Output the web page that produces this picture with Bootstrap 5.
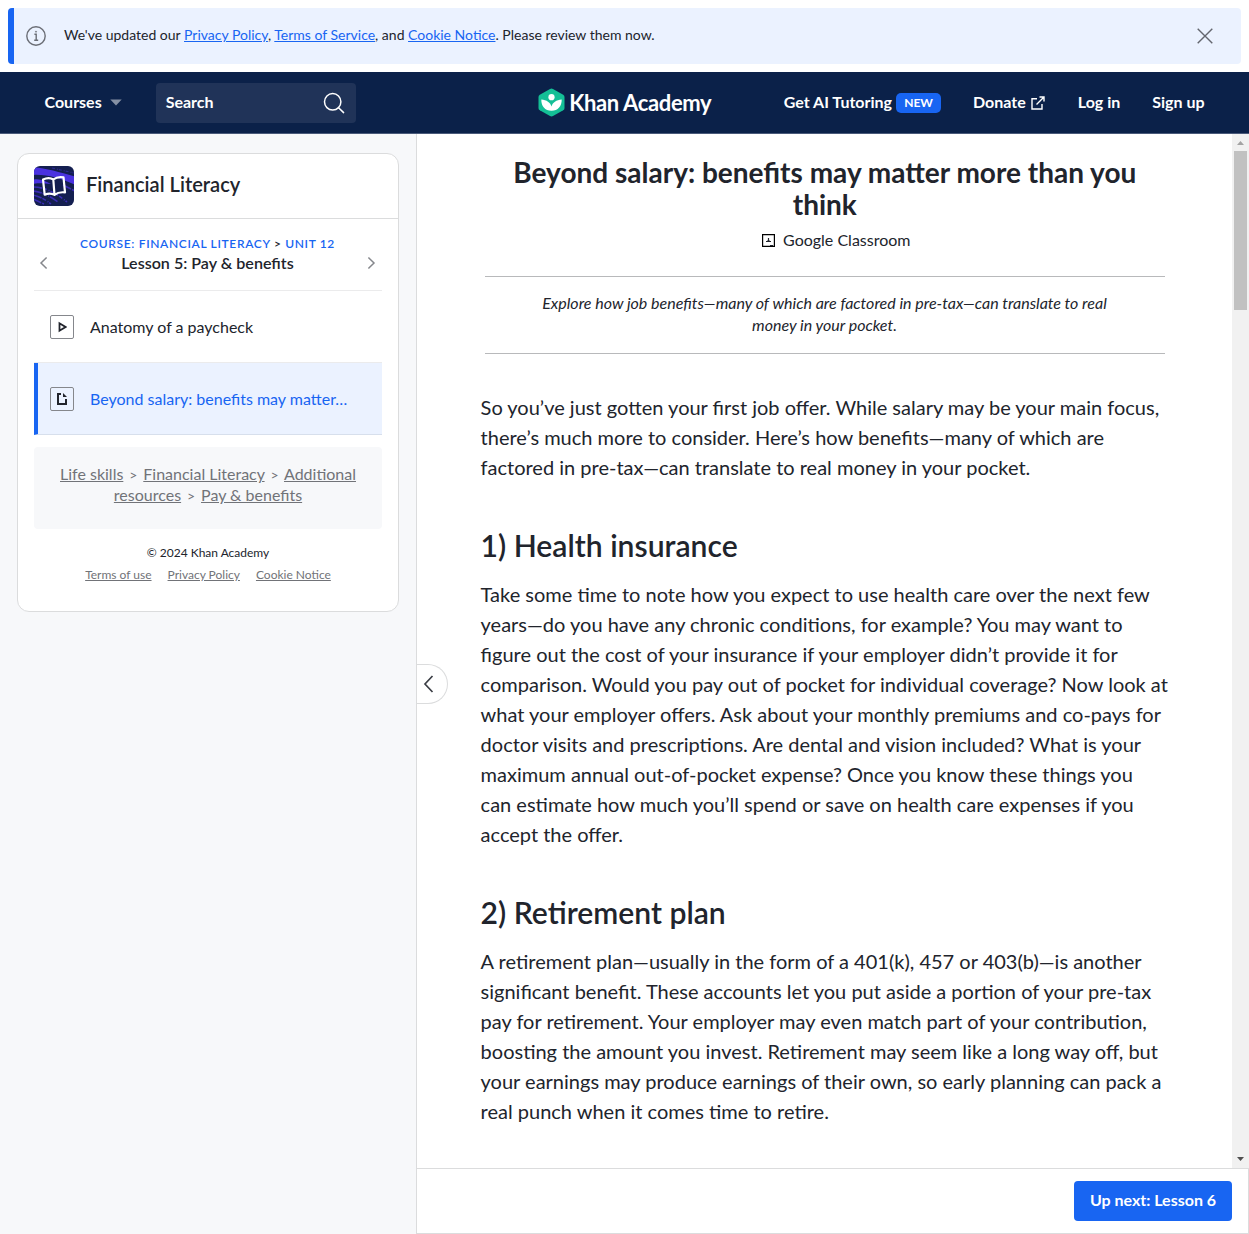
<!DOCTYPE html>
<html lang="en">
<head>
<meta charset="utf-8">
<meta name="viewport" content="width=device-width, initial-scale=1">
<title>Beyond salary: benefits may matter more than you think | Khan Academy</title>
<link href="https://cdn.jsdelivr.net/npm/bootstrap@5.3.0/dist/css/bootstrap.min.css" rel="stylesheet">
<style>
  :root { --ka-blue: #1865f2; --ka-navy: #0b2149; --ka-ink: #21242c; --ka-muted: #717378; --ka-line: #dbdcdd; }
  body { font-family: Lato, "Liberation Sans", sans-serif; color: var(--ka-ink); height: 1234px; font-size: 16px; line-height: 20px; }
  svg { display: block; flex: none; }
  .notice { margin: 8px; height: 56px; background: #ebf2ff; border-radius: 4px; border-left: 6px solid var(--ka-blue); padding: 0 24px 0 10px; font-size: 14px; }
  .notice a { color: var(--ka-blue); }
  .notice-text { margin-left: 16px; padding-bottom: 2px; }
  .topbar { height: 62px; background: var(--ka-navy); border-bottom: 1px solid #4a5a7a; padding: 0 44.5px; font-weight: 700; color: #fff; }
  .topbar a { color: #fff; text-decoration: none; white-space: nowrap; }
  .side-l, .side-r { flex: 1 1 0; }
  .up1 { padding-bottom: 2px; }
  .searchbox { width: 200px; height: 40px; background: #203358; border-radius: 4px; padding: 0 10px; margin-left: 34px; }
  .brand-name { font-size: 22px; line-height: 28px; letter-spacing: -.36px; margin-left: 4.5px; padding-top: 1px; }
  .new-badge { background: var(--ka-blue); border-radius: 5px; font-size: 12px; line-height: 20px; height: 20px; width: 45px; text-align: center; margin-left: 4px; }
  .nav-gap { gap: 32px; }
  .ext-icon { margin: 0 1px 0 5px; }
  .main-area { height: 1100px; }
  .sidebar { width: 417px; background: #f7f8fa; border-right: 1px solid var(--ka-line); padding: 19px 17px; }
  .lesson-card { border: 1px solid var(--ka-line); border-radius: 12px; background: #fff; height: 459px; }
  .course-head { height: 65px; border-bottom: 1px solid var(--ka-line); padding: 0 16px; font-size: 20.1px; line-height: 24px; }
  .course-name { padding: 0 0 4px 12px; }
  .semi { font-weight: 600; }
  .lesson-nav { margin: 0 16px; height: 72px; border-bottom: 1px solid #ebebec; padding: 16px 6px 0 5px; }
  .chev { margin-top: 20px; }
  .crumb { font-size: 12px; letter-spacing: .65px; line-height: 18px; color: var(--ka-ink); }
  .crumb a { color: var(--ka-blue); text-decoration: none; }
  .lesson-name { font-size: 16.080px; }
  .lesson-row { margin: 0 16px; height: 72px; padding: 0 16px; box-shadow: 0 -1px #ebebec; }
  .lesson-row.current { background: #ebf2ff; color: var(--ka-blue); border-left: 4px solid var(--ka-blue); padding-left: 12px; border-bottom: 1px solid #d7dfec; }
  .kind { width: 24px; height: 24px; border: 1px solid #85878c; border-radius: 2px; margin-right: 16px; }
  .path-box { margin: 12px 16px 0; height: 82px; padding: 16px 20px 0; background: #f7f8fa; border-radius: 4px; color: var(--ka-muted); line-height: 21px; text-align: center; }
  .path-box > div + div { margin-top: 0; }
  .path-box a, .legal a { color: var(--ka-muted); text-decoration: underline; }
  .sep { font-size: 14px; line-height: 1; margin: 0 1.800px; }
  .legal { font-size: 12px; line-height: 20px; text-align: center; padding-top: 14px; }
  .legal-links { padding-top: 2px; }
  .article-col { width: 832px; }
  .reader { height: 1034px; }
  .article { width: 815px; padding: 0 63px 0 63.600px; overflow: hidden; }
  .title-main { font-size: 28px; line-height: 32px; font-weight: 700; margin: 22px 0 0; text-align: center; }
  .classroom { margin-top: 9px; height: 22px; padding-left: 23px; }
  .blurb { margin: 25px 4px 0 4.400px; padding: 15px 54px 16px 53px; border: solid #b8b9bb; border-width: 1px 0; height: 78px; font-style: italic; line-height: 22px; text-align: center; }
  .prose { font-size: 20px; line-height: 30px; margin: 15px 0 0; white-space: nowrap; }
  .blurb + .prose { margin-top: 38px; }
  .head2 { font-size: 30.120px; line-height: 38px; margin: 44px 0 0; }
  .scroller { width: 17px; background: #f1f1f1; padding: 0 2px 0 2px; }
  .thumb { width: 13px; height: 159px; background: #c1c1c1; }
  .bottom-bar { height: 66px; border: 1px solid var(--ka-line); border-left: 0; padding-right: 16px; }
  .next-btn { background: var(--ka-blue); border: 0; color: #fff; font-weight: 700; font-size: 16px; line-height: 20px; width: 158px; height: 40px; border-radius: 4px; padding: 0 0 3px; }
  .collapse-tab { left: 417px; top: 664px; width: 31px; height: 40px; border: 1px solid var(--ka-line); border-left: 0; border-radius: 0 20px 20px 0; background: #fff; padding-left: 6px; }
</style>
<script src="https://cdn.jsdelivr.net/npm/bootstrap@5.3.0/dist/js/bootstrap.bundle.min.js"></script>
</head>
<body class="position-relative bg-white overflow-hidden">
<div class="overflow-hidden">
  <div class="notice d-flex align-items-center">
    <svg width="24" height="24" viewBox="0 0 24 24" fill="none" stroke="#6b6e76" stroke-width="1.4"><circle cx="12" cy="12" r="9.2"/><path d="M10.4 10.2h1.8v6M10.2 16.3h4"/><circle cx="12" cy="7.7" r=".6" fill="#6b6e76" stroke-width=".6"/></svg>
    <div class="notice-text">We've updated our <a href="#">Privacy Policy</a>, <a href="#">Terms of Service</a>, and <a href="#">Cookie Notice</a>. Please review them now.</div>
    <svg class="ms-auto" width="24" height="24" viewBox="0 0 24 24" stroke="#63666e" stroke-width="1.4"><path d="M4.7 4.7l14.6 14.6M19.3 4.7L4.7 19.3"/></svg>
  </div>
</div>
<header class="topbar d-flex align-items-center">
  <div class="side-l d-flex align-items-center">
    <a href="#" class="d-flex align-items-center"><span class="up1">Courses</span> <svg class="ms-2" width="12" height="7" viewBox="0 0 12 7"><path d="M.3.500h11.400L6 6.500z" fill="#8590a4"/></svg></a>
    <div class="searchbox d-flex align-items-center justify-content-between"><span class="up1">Search</span>
      <svg width="24" height="24" viewBox="0 0 24 24" fill="none" stroke="#fff" stroke-width="1.500" stroke-linecap="round"><circle cx="10.700" cy="10.800" r="8.200"/><path d="M16.600 16.800l5 4.800"/></svg>
    </div>
  </div>
  <a href="#" class="d-flex align-items-center">
    <svg width="27" height="29" viewBox="0 0 27 29"><path d="M12 .9q1.500-.8 3 0l10.200 5.800q1.300.8 1.300 2.400v10.800q0 1.600-1.300 2.400L15 28.100q-1.500.8-3 0L1.800 22.300Q.5 21.500.5 19.900V9.100q0-1.600 1.300-2.400z" fill="#14bf96"/><circle cx="13.500" cy="9.200" r="3.100" fill="#fff"/><path d="M23.700 11.400c-5.200.3-9.300 3-10.200 7.200-.9-4.200-5-6.900-10.200-7.200-.2 6.500 3.600 11.300 10.200 11.300s10.400-4.800 10.200-11.300z" fill="#fff"/></svg>
    <span class="brand-name">Khan Academy</span>
  </a>
  <nav class="side-r nav-gap d-flex align-items-center justify-content-end">
    <a href="#" class="d-flex align-items-center"><span class="up1">Get AI Tutoring</span> <span class="new-badge">NEW</span></a>
    <a href="#" class="d-flex align-items-center"><span class="up1">Donate</span> <svg class="ext-icon" width="14" height="14" viewBox="0 0 14 14" fill="none" stroke="#fff" stroke-width="1.400"><path d="M6 2.700H1v10.300h10V8M8.500 1H13v4.500M13 1L5.500 8.500"/></svg></a>
    <a href="#" class="up1">Log in</a>
    <a href="#" class="up1">Sign up</a>
  </nav>
</header>
<div class="main-area d-flex">
  <aside class="sidebar flex-shrink-0">
    <div class="lesson-card">
      <div class="course-head semi d-flex align-items-center">
        <svg width="40" height="40" viewBox="0 0 40 40"><defs><clipPath id="tile"><rect width="40" height="40" rx="6"/></clipPath></defs><g clip-path="url(#tile)"><path fill="#141f50" d="M0 0h40v40H0z"/><path d="M-2 1c12 1 29 5 44 10v8C27 13 14 8-2 9zM-2 14c7-2 13 1 19 4-8-1-13-1-19 0z" fill="#4a32e0"/><path d="M-1 21c12 0 23 6 34 15M-1 25c9 1 17 5 25 11M-1 29c8 2 13 5 18 9M-1 33l11 5M29 19l12 6" stroke="#3a2cb4" stroke-width="1.600" fill="none" stroke-dasharray="9 1 4 2 1 1"/><path d="M18 2l22 5" stroke="#2c2890" stroke-width="1.200" stroke-dasharray="3 2 1 1"/><path d="M19.300 13.500C16 11.300 12.500 11.800 9 13.500l1.700 15.200c3.500-1.600 6.800-1.600 9.800.2 2.800-2.200 6-3.100 10.500-2.500l-1.500-15.100c-4-.7-7.500 0-10.200 2.200zm0 0l1.200 15.400" stroke="#fff" stroke-width="2.200" fill="none" stroke-linejoin="round"/></g></svg>
        <span class="course-name">Financial Literacy</span>
      </div>
      <div class="lesson-nav d-flex justify-content-between">
        <svg class="chev" width="10" height="16" viewBox="0 0 10 16" fill="none" stroke="#85878c" stroke-width="1.500"><path d="M7.600 2.500L2 8l5.600 5.500"/></svg>
        <div class="text-center">
          <div class="crumb semi"><a href="#">COURSE: FINANCIAL LITERACY</a> &gt; <a href="#">UNIT 12</a></div>
          <div class="lesson-name semi">Lesson 5: Pay &amp; benefits</div>
        </div>
        <svg class="chev" width="10" height="16" viewBox="0 0 10 16" fill="none" stroke="#85878c" stroke-width="1.500"><path d="M2.400 2.500L8 8l-5.600 5.500"/></svg>
      </div>
      <div class="lesson-row d-flex align-items-center"><span class="kind d-flex align-items-center justify-content-center"><svg width="10" height="12" viewBox="0 0 10 12"><path d="M2.500 2.300v7.400L8.500 6z" fill="none" stroke="#21242c" stroke-width="1.800"/></svg></span>Anatomy of a paycheck</div>
      <div class="lesson-row current d-flex align-items-center"><span class="kind d-flex align-items-center justify-content-center"><svg width="12" height="14" viewBox="0 0 12 14"><path d="M5 2H2v10h8V7" fill="none" stroke="#21242c" stroke-width="2"/><path d="M7 1v4h4z" fill="#21242c"/></svg></span>Beyond salary: benefits may matter…</div>
      <div class="path-box"><div><a href="#">Life skills</a> <span class="sep">&gt;</span> <a href="#">Financial Literacy</a> <span class="sep">&gt;</span> <a href="#">Additional</a></div><div><a href="#">resources</a> <span class="sep">&gt;</span> <a href="#">Pay &amp; benefits</a></div></div>
      <div class="legal">© 2024 Khan Academy
        <div class="legal-links d-flex justify-content-center gap-3"><a href="#">Terms of use</a><a href="#">Privacy Policy</a><a href="#">Cookie Notice</a></div>
      </div>
    </div>
  </aside>
  <main class="article-col">
    <div class="reader d-flex">
      <article class="article">
        <h1 class="title-main">Beyond salary: benefits may matter more than you<br>think</h1>
        <div class="classroom d-flex align-items-center justify-content-center"><svg width="13" height="13" viewBox="0 0 13 13"><path d="M.600.600h11.800v11.800H.600z" fill="none" stroke="#000" stroke-width="1.200"/><path d="M4 7.500h5M6.500 4v3M5.500 6.500h2M8 11.500h3" stroke="#21242c" stroke-width="1.200"/></svg><span class="ms-2">Google Classroom</span></div>
        <div class="blurb">Explore how job benefits—many of which are factored in pre-tax—can translate to real money in your pocket.</div>
        <p class="prose">So you’ve just gotten your first job offer. While salary may be your main focus,<br>there’s much more to consider. Here’s how benefits—many of which are<br>factored in pre-tax—can translate to real money in your pocket.</p>
        <h2 class="head2 semi">1) Health insurance</h2>
        <p class="prose">Take some time to note how you expect to use health care over the next few<br>years—do you have any chronic conditions, for example? You may want to<br>figure out the cost of your insurance if your employer didn’t provide it for<br>comparison. Would you pay out of pocket for individual coverage? Now look at<br>what your employer offers. Ask about your monthly premiums and co-pays for<br>doctor visits and prescriptions. Are dental and vision included? What is your<br>maximum annual out-of-pocket expense? Once you know these things you<br>can estimate how much you’ll spend or save on health care expenses if you<br>accept the offer.</p>
        <h2 class="head2 semi">2) Retirement plan</h2>
        <p class="prose">A retirement plan—usually in the form of a 401(k), 457 or 403(b)—is another<br>significant benefit. These accounts let you put aside a portion of your pre-tax<br>pay for retirement. Your employer may even match part of your contribution,<br>boosting the amount you invest. Retirement may seem like a long way off, but<br>your earnings may produce earnings of their own, so early planning can pack a<br>real punch when it comes time to retire.</p>
      </article>
      <div class="scroller d-flex flex-column">
        <svg width="13" height="17" viewBox="0 0 13 17"><path d="M3 11h7L6.500 7z" fill="#a3a3a3"/></svg>
        <div class="thumb"></div>
        <svg class="mt-auto" width="13" height="17" viewBox="0 0 13 17"><path d="M3 6h7L6.500 10z" fill="#505050"/></svg>
      </div>
    </div>
    <div class="bottom-bar d-flex align-items-center justify-content-end"><button class="next-btn" type="button">Up next: Lesson 6</button></div>
  </main>
</div>
<button type="button" class="collapse-tab position-absolute d-flex align-items-center" aria-label="Collapse"><svg width="12" height="20" viewBox="0 0 12 20" fill="none" stroke="#3b3e45" stroke-width="1.700"><path d="M9.500 2L2 10l7.500 8"/></svg></button>
</body>
</html>
